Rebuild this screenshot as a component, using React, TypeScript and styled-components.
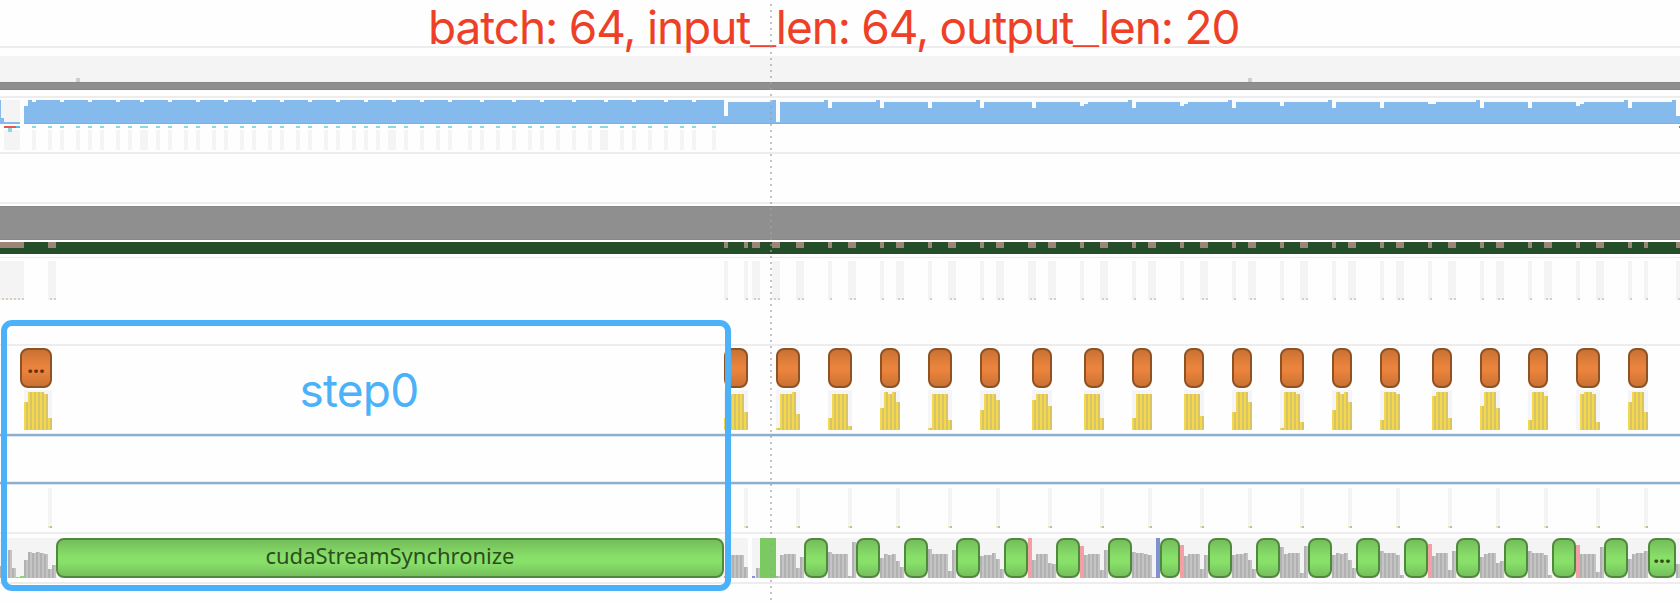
import React from "react";
import styled, { createGlobalStyle, css } from "styled-components";

const UNIT = 4;
const COLUMNS = 420;

const GlobalStyle = createGlobalStyle`
  body { margin: 0; background: #fefefe; }
`;

const Page = styled.main`
  position: relative;
  display: flex;
  flex-direction: column;
  width: 1680px;
  height: 602px;
  overflow: hidden;
  background: #fefefe;
`;

const Gap = styled.div<{ $h: number }>`
  flex: none;
  height: ${(p) => p.$h}px;
`;

const Divider = styled.hr<{ $h?: number }>`
  flex: none;
  width: 100%;
  height: ${(p) => p.$h ?? 2}px;
  margin: 0;
  border: 0;
  background: #ededed;
`;

const ThreadDivider = styled.hr`
  flex: none;
  width: 100%;
  height: 4px;
  margin: 0;
  border: 0;
  background: linear-gradient(#ececec 0 1px, #8fadce 1px 3px, #d9e5f1 3px 4px);
`;

const Lane = styled.div<{ $h: number; $fill?: string }>`
  flex: none;
  display: grid;
  grid-template-columns: repeat(${COLUMNS}, ${UNIT}px);
  grid-template-rows: ${(p) => p.$h}px;
  background: ${(p) => p.$fill ?? "transparent"};
`;

const Band = styled.div<{ $h: number }>`
  flex: none;
  height: ${(p) => p.$h}px;
  box-sizing: border-box;
  background: #8f8f8f;
  border: solid #888;
  border-width: 1px 0;
`;

const Cell = styled.div<{ $fill: string; $h?: number; $top?: boolean }>`
  grid-row: 1;
  align-self: ${(p) => (p.$top ? "start" : "end")};
  height: ${(p) => (p.$h ? `${p.$h}px` : "100%")};
  background: ${(p) => p.$fill};
`;

const dotted = {
  memory: "linear-gradient(90deg, #f6f3ec 0 2px, #d6cfc2 2px 4px)",
  call: "linear-gradient(90deg, #f1ec9c 0 2px, #bdbcae 2px 4px)",
};

const DotCell = styled.div<{ $kind: keyof typeof dotted }>`
  grid-row: 1;
  background: ${(p) => dotted[p.$kind]} 0 0 / 4px 2px;
`;

const tones = {
  orange: css`
    background: linear-gradient(#c66f31, #e9833d 45%, #e9833d 58%, #c66f31) border-box;
    border-color: #8f5224;
    color: #5e3210;
  `,
  green: css`
    background: linear-gradient(#72b95a, #88e069 48%, #88e069 62%, #72b95a) border-box;
    border-color: #4f8a3c;
    color: #2c4d20;
  `,
};

const Block = styled.div<{ $tone: keyof typeof tones }>`
  grid-row: 1;
  display: flex;
  justify-content: center;
  box-sizing: border-box;
  min-width: 0;
  border: 2px solid;
  border-radius: 8px;
  font: 22px/30px "Noto Sans", sans-serif;
  white-space: nowrap;
  z-index: 1;
  ${(p) => tones[p.$tone]}
`;

const Ellipsis = styled.span`
  font-weight: 700;
  font-size: 21px;
`;

const Chart = styled.svg`
  flex: none;
  display: block;
  grid-row: 1;
  grid-column: 1 / -1;
`;

const annotation = css`
  font: 400 46px/56px Inter, sans-serif;
  white-space: nowrap;
`;

const Title = styled.h1`
  position: absolute;
  top: -1px;
  left: 428px;
  margin: 0;
  ${annotation}
  letter-spacing: -1.08px;
  word-spacing: -0.4px;
  color: #ee4026;
`;

const Underscore = styled.span`
  font-family: "Liberation Sans", sans-serif;
  font-weight: 700;
  line-height: 1;
  letter-spacing: 0;
  vertical-align: 3px;
`;

const StepFrame = styled.section`
  position: absolute;
  z-index: 3;
  left: 1px;
  top: 320px;
  display: flex;
  justify-content: center;
  box-sizing: border-box;
  width: 730px;
  height: 271px;
  padding: 36px 14px 0 0;
  border: 6px solid #4bb2fa;
  border-radius: 11px;
  ${annotation}
  letter-spacing: -0.8px;
  color: #4bb2fa;
`;

const Cursor = styled.i`
  position: absolute;
  z-index: 2;
  left: 770px;
  top: 4px;
  bottom: 0;
  width: 2px;
  background: repeating-linear-gradient(rgba(160, 160, 160, 0.62) 0 2px, transparent 2px 6px);
`;

type Span = [at: number, width?: number];
const col = ([at, width = 1]: Span) => ({ gridColumn: `${at + 1} / span ${width}` });

const notches = [8, 15, 22, 29, 35, 42, 49, 56, 63, 70, 77, 84, 91, 98, 105, 112, 120, 128, 135, 143, 151, 158, 166, 173];
const raised = [193, 206, 219, 244, 282, 307, 332, 369, 406, 418];
const dips: [number, number][] = [
  [181, 16], [194, 22], [207, 8], [220, 8], [232, 8], [245, 8], [258, 8], [270, 6], [271, 4], [283, 8],
  [295, 6], [296, 4], [308, 8], [320, 6], [333, 8], [345, 8], [357, 4], [358, 4], [370, 8], [382, 8],
  [394, 6], [395, 4], [407, 8], [419, 16],
];

const kernels: Span[] = [
  [8], [12], [15], [19], [22], [25], [29], [32], [35, 2], [39], [42], [46], [49], [53], [56], [60], [63], [67],
  [70], [74], [77], [81], [84], [88], [91], [94], [97, 2], [101], [105], [109], [112], [117], [120], [124], [128],
  [132], [135], [139], [143], [147], [150, 2], [155], [158], [162], [166], [170], [173], [178],
];

const transfers: Span[] = [
  [0, 6], [12, 2], [181], [186], [188, 2], [193, 2], [199, 2], [207], [212, 2], [220], [224, 2], [232], [237, 2],
  [245], [249, 2], [257, 2], [262, 2], [270], [275, 2], [283], [287, 2], [295], [300, 2], [308], [312, 2], [320],
  [325, 2], [333], [337, 2], [345], [349, 2], [357], [362, 2], [370], [374, 2], [382], [386, 2], [394], [399, 2],
  [407], [411], [419],
];

const steps: { at: number; w: number; bars: number[] }[] = [
  { at: 5, w: 8, bars: [0, 28, 38, 38, 38, 38, 36, 12] },
  { at: 181, w: 6, bars: [12, 36, 36, 36, 36, 18] },
  { at: 194, w: 6, bars: [2, 36, 36, 36, 38, 16] },
  { at: 207, w: 6, bars: [12, 36, 36, 36, 36, 4] },
  { at: 220, w: 5, bars: [22, 38, 36, 38, 28] },
  { at: 232, w: 6, bars: [2, 36, 36, 36, 36, 10] },
  { at: 245, w: 5, bars: [20, 36, 36, 36, 30] },
  { at: 258, w: 5, bars: [30, 36, 36, 36, 24] },
  { at: 271, w: 5, bars: [36, 36, 36, 36, 12] },
  { at: 283, w: 5, bars: [12, 36, 36, 36, 36] },
  { at: 296, w: 5, bars: [36, 36, 36, 36, 14] },
  { at: 308, w: 5, bars: [18, 38, 38, 38, 28] },
  { at: 320, w: 6, bars: [2, 38, 38, 38, 36, 8] },
  { at: 333, w: 5, bars: [20, 38, 36, 38, 28] },
  { at: 345, w: 5, bars: [10, 38, 38, 38, 36] },
  { at: 358, w: 5, bars: [34, 38, 38, 38, 12] },
  { at: 370, w: 5, bars: [24, 38, 38, 38, 22] },
  { at: 382, w: 5, bars: [10, 38, 38, 38, 34] },
  { at: 394, w: 6, bars: [0, 36, 38, 38, 36, 8] },
  { at: 407, w: 5, bars: [28, 38, 38, 38, 18] },
];

const syncs: [number, number][] = [
  [201, 6], [214, 6], [226, 6], [239, 6], [251, 6], [264, 6], [277, 6], [290, 5], [302, 6], [314, 6], [327, 6],
  [339, 6], [351, 6], [364, 6], [376, 6], [388, 6], [401, 6],
];

const apiCalls: [number, number[]][] = [
  [0, [12, 0, 28, 10, 1, 0, 18, 26, 25, 26, 25, 24, 9, 13]],
  [181, [2, 23, 23, 23, 23, 11]],
  [189, [10]],
  [194, [2, 23, 24, 24, 24, 10, 21]],
  [207, [26, 24, 24, 24, 24, 2, 36]],
  [220, [20, 24, 23, 24, 17, 11]],
  [232, [29, 24, 24, 24, 24, 7, 28]],
  [245, [22, 23, 23, 25, 19, 9]],
  [258, [18, 24, 24, 24, 15, 14]],
  [271, [23, 24, 24, 24, 8, 28]],
  [283, [26, 25, 25, 24, 23, 1]],
  [296, [22, 24, 24, 24, 9, 23]],
  [308, [23, 24, 24, 25, 18, 9]],
  [320, [31, 24, 25, 25, 25, 5, 32]],
  [333, [23, 25, 24, 25, 18, 10]],
  [345, [27, 25, 25, 25, 23, 3]],
  [358, [22, 25, 25, 25, 8, 27]],
  [370, [21, 24, 25, 25, 15, 17]],
  [382, [27, 25, 25, 25, 23, 3]],
  [395, [24, 24, 24, 24, 6, 31]],
  [407, [19, 24, 25, 25, 27]],
  [419, [14]],
];

const marks: [number, number, string][] = [
  [5, 2, "#86dc68"], [188, 2, "#8793d8"], [257, 40, "#f2a0a4"], [270, 32, "#f2a0a4"], [289, 40, "#7f92cf"],
  [295, 33, "#f2a0a4"], [357, 34, "#f2a0a4"], [394, 33, "#f2a0a4"],
];

const Bars = ({ at, values, height, left, right }: { at: number; values: number[]; height: number; left: string; right: string }) => (
  <>
    {values.map((v, i) => (
      <g key={i}>
        <rect x={(at + i) * UNIT} y={height - v} width={2} height={v} fill={left} />
        <rect x={(at + i) * UNIT + 2} y={height - v} width={2} height={v} fill={right} />
      </g>
    ))}
  </>
);

const Utilization = () => (
  <Chart width={1680} height={24} shapeRendering="crispEdges">
    <rect x={1} width={19} height={24} fill="#f4f4f4" />
    <rect x={24} width={1656} height={24} fill="#fafafa" />
    <g fill="#84baec">
      <rect width={1} height={24} />
      <rect y={18} width={4} height={6} />
      <rect y={22} width={20} height={2} />
      <rect x={24} y={6} width={4} height={18} />
      <rect x={28} width={696} height={24} />
      <rect x={724} y={2} width={956} height={22} />
      {raised.map((u) => <rect key={u} x={u * UNIT} width={UNIT} height={4} />)}
    </g>
    <rect x={24} y={23} width={1656} height={1} fill="#78b1e8" />
    <g fill="#fbfbfb">
      {notches.map((u) => <rect key={u} x={u * UNIT} width={UNIT} height={2} />)}
      {dips.map(([u, h]) => <rect key={u} x={u * UNIT} width={UNIT} height={h} />)}
    </g>
  </Chart>
);

export default function App() {
  return (
    <Page>
      <GlobalStyle />
      <Gap $h={46} />
      <Divider />
      <Gap $h={8} />
      <Lane $h={26} $fill="#f4f4f4">
        {[19, 312].map((u) => <Cell key={u} $fill="#cfcfcf" $h={4} style={col([u])} />)}
      </Lane>
      <Band $h={8} />
      <Gap $h={6} />
      <Divider />
      <Gap $h={2} />
      <Utilization />
      <Gap $h={2} />
      <Lane $h={2}>
        <Cell $fill="#e9564e" style={col([1, 3])} />
        <Cell $fill="#55b9ea" style={col([4])} />
        {kernels.map((k) => <Cell key={k[0]} $fill="#8bdae2" style={col(k)} />)}
        <Cell $fill="linear-gradient(90deg, transparent 75%, #e9564e 75%)" style={col([419])} />
      </Lane>
      <Lane $h={2}>
        <Cell $fill="#8bdae2" style={col([2])} />
      </Lane>
      <Lane $h={20}>
        <Cell $fill="#f4f4f4" style={col([1, 4])} />
        <Cell $fill="#8bdae2" $h={2} $top style={col([2])} />
        {kernels.map((k) => <Cell key={k[0]} $fill="#f4f4f4" style={col(k)} />)}
      </Lane>
      <Gap $h={2} />
      <Divider />
      <Gap $h={48} />
      <Divider />
      <Gap $h={2} />
      <Band $h={34} />
      <Gap $h={2} />
      <Lane $h={6} $fill="#234e29">
        {transfers.map((t) => <Cell key={t[0]} $fill="#9d8578" style={col(t)} />)}
      </Lane>
      <Lane $h={6} $fill="#234e29" />
      <Gap $h={3} />
      <Divider $h={1} />
      <Gap $h={3} />
      <Lane $h={37}>
        {transfers.map((t) => <Cell key={t[0]} $fill="#f4f4f4" style={col(t)} />)}
      </Lane>
      <Lane $h={2}>
        {transfers.map((t) => <DotCell key={t[0]} $kind="memory" style={col(t)} />)}
      </Lane>
      <Gap $h={44} />
      <Divider />
      <Gap $h={2} />
      <Lane $h={40}>
        {steps.map((s, i) => (
          <Block key={s.at} $tone="orange" style={col([s.at, s.w])}>
            {i === 0 && <Ellipsis>...</Ellipsis>}
          </Block>
        ))}
      </Lane>
      <Gap $h={2} />
      <Lane $h={40}>
        {steps.map((s) => (
          <Cell key={s.at} $fill="#f5f5f7" style={col(s.at === 5 ? [6, 7] : [s.at, s.w])} />
        ))}
        <Chart width={1680} height={40} shapeRendering="crispEdges">
          {steps.map((s) => (
            <Bars key={s.at} at={s.at} values={s.bars} height={40} left="#f4d84c" right="#d8c468" />
          ))}
        </Chart>
      </Lane>
      <Gap $h={3} />
      <ThreadDivider />
      <Gap $h={44} />
      <ThreadDivider />
      <Gap $h={3} />
      <Lane $h={38}>
        {steps.map((s) => <Cell key={s.at} $fill="#f4f4f4" style={col([s.at + s.w - 1])} />)}
      </Lane>
      <Lane $h={2}>
        {steps.map((s) => <DotCell key={s.at} $kind="call" style={col([s.at + s.w - 1])} />)}
      </Lane>
      <Gap $h={4} />
      <Divider />
      <Gap $h={4} />
      <Lane $h={40}>
        <Cell $fill="#f4f4f4" style={col([0, 187])} />
        <Cell $fill="#f4f4f4" style={col([188, 232])} />
        <Chart width={1680} height={40} shapeRendering="crispEdges">
          {apiCalls.map(([at, values]) => (
            <Bars key={at} at={at} values={values} height={40} left="#b1b1b1" right="#c4c4c4" />
          ))}
          {marks.map(([u, h, fill]) => (
            <rect key={u} x={u * UNIT} y={40 - h} width={u === 188 ? 3 : 4} height={h} fill={fill} />
          ))}
          <rect x={760} width={16} height={40} fill="#7bc961" />
        </Chart>
        <Block $tone="green" style={col([14, 167])}>cudaStreamSynchronize</Block>
        {syncs.map((s) => <Block key={s[0]} $tone="green" style={col(s)} />)}
        <Block $tone="green" style={col([412, 7])}><Ellipsis>...</Ellipsis></Block>
      </Lane>
      <Gap $h={4} />
      <Divider />
      <Cursor />
      <Title>
        batch: 64, input<Underscore>_</Underscore>len: 64, output<Underscore>_</Underscore>len: 20
      </Title>
      <StepFrame>step0</StepFrame>
    </Page>
  );
}
